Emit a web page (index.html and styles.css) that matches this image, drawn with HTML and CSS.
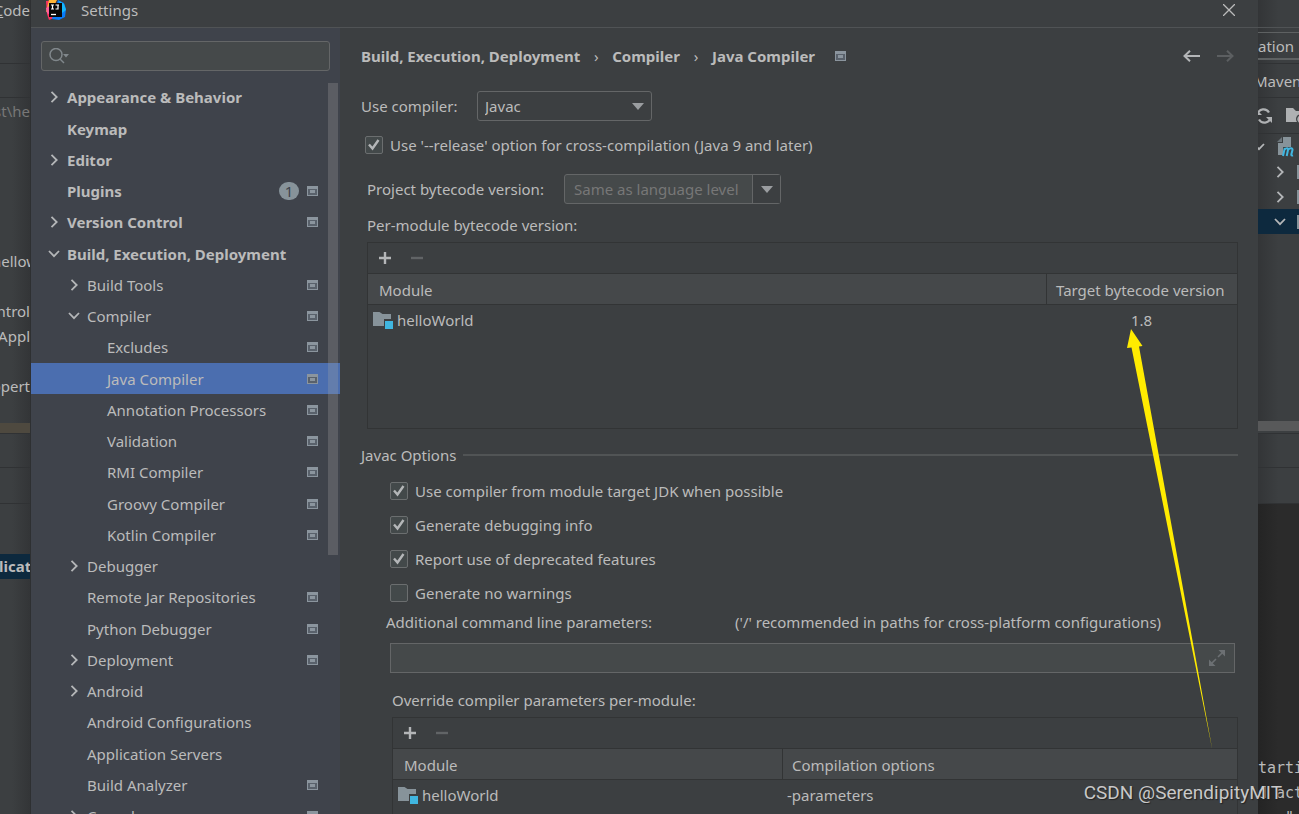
FILE: index.html
```html
<!DOCTYPE html>
<html lang="en">
<head>
<meta charset="utf-8">
<title>Settings</title>
<link rel="stylesheet" href="styles.css">
</head>
<body>
<svg class="defs" aria-hidden="true">
  <symbol id="right" viewBox="0 0 16 16"><path d="M5.5 2.8 10.7 8 5.5 13.2" fill="none" stroke="#b4b6b8" stroke-width="1.8"/></symbol>
  <symbol id="down" viewBox="0 0 16 16"><path d="M3 5 8 10.2 13 5" fill="none" stroke="#b4b6b8" stroke-width="1.8"/></symbol>
  <symbol id="proj" viewBox="0 0 11 10"><path fill="#8b959e" fill-rule="evenodd" d="M0 0h11v10H0zM1 3v6h9V3z"/><path fill="#59616b" d="M1 3h9v6H1z"/><path fill="#8b959e" d="M3 4h5v3H3z"/></symbol>
  <symbol id="plus" viewBox="0 0 14 14"><path d="M7 1v12M1 7h12" stroke="#b4b6b8" stroke-width="2.4"/></symbol>
  <symbol id="minus" viewBox="0 0 14 14"><path d="M1 7h12" stroke="#616466" stroke-width="2.4"/></symbol>
  <symbol id="folder" viewBox="0 0 20 18"><path d="M0 1h6.500l3 2H18v5h-7v7H0z" fill="#87939a"/><path d="M12 10h8v8h-8z" fill="#40b6e0"/></symbol>
  <symbol id="tri" viewBox="0 0 12 7"><path d="M0 0h12L6 7z" fill="#9a9da0"/></symbol>
</svg>
<div class="screen">
  <div class="ide ide-left">
    <div class="cell menu"><span><u>C</u>ode</span></div>
    <div class="cell nav"></div>
    <div class="files">
      <span class="path">st\he</span>
      <span class="far">hellow</span>
      <span class="mid">ntrol</span>
      <span>Appl</span>
      <span class="mid">opert</span>
    </div>
    <div class="band"></div>
    <div class="cell tab"></div>
    <div class="cell bar"></div>
    <div class="services"><b>licat</b></div>
  </div>

  <main class="dialog">
    <header class="titlebar">
      <svg class="logo" viewBox="0 0 20 20"><path d="M0 1 9 0 13 16 3 20 1 14z" fill="#fc315f"/><path d="M3 0h8L6 9 0 12z" fill="#ffb638"/><path d="M0 8 5 5 6 16 1 13z" fill="#ff5c9d"/><path d="M12 0 18 3 20 9 19 17 13 20 6 19z" fill="#087cfa"/><path d="M13 1 18 4 20 10 16 13z" fill="#14b8fa"/><path d="M3 3h13v14H3z" fill="#080808"/><path d="M5 5h3M6.500 5v4M5 9h3M9.500 5H13M12 5v4H9.500" fill="none" stroke="#fff" stroke-width="1.200"/><path d="M5 14.500h5" stroke="#fff" stroke-width="1.300"/></svg>
      <h1>Settings</h1>
      <button class="icon-btn close" aria-label="Close"><svg viewBox="0 0 12 12" width="12" height="12"><path d="M0 0 12 12M12 0 0 12" stroke="#bbb" stroke-width="1.300"/></svg></button>
    </header>
    <div class="body">
      <aside class="sidebar">
        <div class="search">
          <svg viewBox="0 0 21 16" width="21" height="16"><circle cx="7" cy="6.500" r="6" fill="none" stroke="#80878b" stroke-width="1.500"/><path d="m11 11 4 4" stroke="#80878b" stroke-width="1.500"/><path d="M14 6h6l-3 3.500z" fill="#80878b"/></svg>
          <input type="text" aria-label="Search settings">
        </div>
        <nav class="tree">
          <a href="#" class="l0"><svg><use href="#right"/></svg><span>Appearance &amp; Behavior</span></a>
          <a href="#" class="l0"><i></i><span>Keymap</span></a>
          <a href="#" class="l0"><svg><use href="#right"/></svg><span>Editor</span></a>
          <a href="#" class="l0"><i></i><span>Plugins</span><em>1</em><svg class="p"><use href="#proj"/></svg></a>
          <a href="#" class="l0"><svg><use href="#right"/></svg><span>Version Control</span><svg class="p"><use href="#proj"/></svg></a>
          <a href="#" class="l0"><svg><use href="#down"/></svg><span>Build, Execution, Deployment</span></a>
          <a href="#" class="l1"><svg><use href="#right"/></svg><span>Build Tools</span><svg class="p"><use href="#proj"/></svg></a>
          <a href="#" class="l1"><svg><use href="#down"/></svg><span>Compiler</span><svg class="p"><use href="#proj"/></svg></a>
          <a href="#" class="l2"><i></i><span>Excludes</span><svg class="p"><use href="#proj"/></svg></a>
          <a href="#" class="l2 selected"><i></i><span>Java Compiler</span><svg class="p"><use href="#proj"/></svg></a>
          <a href="#" class="l2"><i></i><span>Annotation Processors</span><svg class="p"><use href="#proj"/></svg></a>
          <a href="#" class="l2"><i></i><span>Validation</span><svg class="p"><use href="#proj"/></svg></a>
          <a href="#" class="l2"><i></i><span>RMI Compiler</span><svg class="p"><use href="#proj"/></svg></a>
          <a href="#" class="l2"><i></i><span>Groovy Compiler</span><svg class="p"><use href="#proj"/></svg></a>
          <a href="#" class="l2"><i></i><span>Kotlin Compiler</span><svg class="p"><use href="#proj"/></svg></a>
          <a href="#" class="l1"><svg><use href="#right"/></svg><span>Debugger</span></a>
          <a href="#" class="l1"><i></i><span>Remote Jar Repositories</span><svg class="p"><use href="#proj"/></svg></a>
          <a href="#" class="l1"><i></i><span>Python Debugger</span><svg class="p"><use href="#proj"/></svg></a>
          <a href="#" class="l1"><svg><use href="#right"/></svg><span>Deployment</span><svg class="p"><use href="#proj"/></svg></a>
          <a href="#" class="l1"><svg><use href="#right"/></svg><span>Android</span></a>
          <a href="#" class="l1"><i></i><span>Android Configurations</span></a>
          <a href="#" class="l1"><i></i><span>Application Servers</span></a>
          <a href="#" class="l1"><i></i><span>Build Analyzer</span><svg class="p"><use href="#proj"/></svg></a>
          <a href="#" class="l1"><svg><use href="#right"/></svg><span>Console</span><svg class="p"><use href="#proj"/></svg></a>
          <div class="thumb"></div>
        </nav>
      </aside>

      <section class="content">
        <div class="crumbs">
          <b>Build, Execution, Deployment</b><span>›</span><b>Compiler</b><span>›</span><b>Java Compiler</b>
          <svg class="p"><use href="#proj"/></svg>
          <div class="history">
            <button class="icon-btn" aria-label="Back"><svg viewBox="0 0 17 12" width="17" height="12"><path d="M17 6H1.500M7 .8 1.500 6 7 11.200" fill="none" stroke="#b4b6b8" stroke-width="2"/></svg></button>
            <button class="icon-btn" aria-label="Forward" disabled><svg viewBox="0 0 17 12" width="17" height="12"><path d="M0 6h15.500M10 .8 15.500 6 10 11.200" fill="none" stroke="#5c5f61" stroke-width="2"/></svg></button>
          </div>
        </div>

        <div class="field">
          <label for="compiler">Use compiler:</label>
          <div class="select"><select id="compiler"><option>Javac</option></select><svg><use href="#tri"/></svg></div>
        </div>
        <label class="check release"><input type="checkbox" checked>Use '--release' option for cross-compilation (Java 9 and later)</label>
        <div class="field indent">
          <label for="bytecode">Project bytecode version:</label>
          <div class="combo"><input id="bytecode" type="text" value="Same as language level" disabled><button aria-label="Show versions"><svg><use href="#tri"/></svg></button></div>
        </div>
        <p class="caption indent">Per-module bytecode version:</p>
        <div class="panel modules">
          <div class="toolbar"><button class="icon-btn" aria-label="Add"><svg><use href="#plus"/></svg></button><button class="icon-btn" aria-label="Remove" disabled><svg><use href="#minus"/></svg></button></div>
          <table>
            <colgroup><col><col class="target"></colgroup>
            <thead><tr><th>Module</th><th>Target bytecode version</th></tr></thead>
            <tbody><tr><td><div class="module"><svg><use href="#folder"/></svg>helloWorld</div></td><td class="center">1.8</td></tr></tbody>
          </table>
        </div>

        <h2>Javac Options</h2>
        <div class="checks">
          <label class="check"><input type="checkbox" checked>Use compiler from module target JDK when possible</label>
          <label class="check"><input type="checkbox" checked>Generate debugging info</label>
          <label class="check"><input type="checkbox" checked>Report use of deprecated features</label>
          <label class="check"><input type="checkbox">Generate no warnings</label>
        </div>
        <div class="params">
          <label for="params">Additional command line parameters:</label>
          <span>('/' recommended in paths for cross-platform configurations)</span>
        </div>
        <div class="expand">
          <input id="params" type="text">
          <button class="icon-btn" aria-label="Expand"><svg viewBox="0 0 16 16" width="16" height="16"><path d="M9.500 0H16v6.500zM0 9.500V16h6.500z" fill="#6c7073"/><path d="m14 2-5 5M2 14l5-5" stroke="#6c7073" stroke-width="1.600"/></svg></button>
        </div>
        <p class="caption override">Override compiler parameters per-module:</p>
        <div class="panel options">
          <div class="toolbar"><button class="icon-btn" aria-label="Add"><svg><use href="#plus"/></svg></button><button class="icon-btn" aria-label="Remove" disabled><svg><use href="#minus"/></svg></button></div>
          <table>
            <colgroup><col class="name"><col></colgroup>
            <thead><tr><th>Module</th><th>Compilation options</th></tr></thead>
            <tbody><tr><td><div class="module"><svg><use href="#folder"/></svg>helloWorld</div></td><td>-parameters</td></tr></tbody>
          </table>
        </div>
      </section>
    </div>
  </main>

  <div class="ide ide-right">
    <div class="head"></div>
    <div class="cell run"><span>ation</span></div>
    <div class="cell nav maven"><span>Maven</span></div>
    <div class="cell tools">
      <svg viewBox="0 0 16 16" width="16" height="16"><path d="M1.500 6A6.300 6.300 0 0 1 13 4.500M14.500 10A6.300 6.300 0 0 1 3 11.500" fill="none" stroke="#afb1b3" stroke-width="2.200"/><path d="M0 1v6h6zM16 15V9h-6z" fill="#afb1b3"/></svg>
      <svg viewBox="0 0 20 18" width="20" height="18"><path d="M0 1h7l3 3h10v11H0z" fill="#afb1b3"/><circle cx="15" cy="12" r="5" fill="#3c3f41"/><path d="M18 9.500A3.500 3.500 0 1 0 18 15" fill="none" stroke="#afb1b3" stroke-width="1.800"/></svg>
    </div>
    <div class="projects">
      <div class="root"><svg width="16" height="16"><use href="#down"/></svg><svg viewBox="0 0 18 20" width="18" height="20"><path d="M6 0h8v10H6v8H1V6h5z" fill="#87939a"/><path d="M5 0v5H0z" fill="#6c767c"/><path d="m6 19 1.800-8M7.500 12.500c2-2 4-1.500 3.500.5l-1.300 6M11 13c2-2.500 5-2 4.500 0l-1.200 4.500q0 1.500 1.700.8" fill="none" stroke="#40b6e0" stroke-width="2"/></svg></div>
      <div><svg width="16" height="16"><use href="#right"/></svg><i></i></div>
      <div><svg width="16" height="16"><use href="#right"/></svg><i></i></div>
      <div class="active"><svg width="16" height="16"><use href="#down"/></svg><i></i></div>
    </div>
    <div class="hscroll"></div>
    <div class="cell tab"></div>
    <div class="cell bar"></div>
    <pre class="console">tarti
d act
   "</pre>
  </div>

  <svg class="arrow" viewBox="0 0 86 422" width="86" height="422"><path d="M5 0 16.500 17 13 17.500 86.500 421.500 5.500 18.500 1 19z" fill="#ffeb00"/></svg>
  <div class="watermark">CSDN @SerendipityMIT</div>
</div>
</body>
</html>
```

FILE: styles.css
```css
* { box-sizing: border-box; }
body {
  margin: 0;
  background: #3c3f41;
  color: #bbbbbb;
  font: 15px/20px "Noto Sans", sans-serif;
}
button, input, select { font: inherit; color: inherit; }
h1, h2, p, pre { margin: 0; font-size: 15px; font-weight: 400; }
.defs { position: absolute; width: 0; height: 0; }
.screen { position: relative; display: flex; height: 100vh; overflow: hidden; }

/* Window behind the dialog */
.ide { display: flex; flex-direction: column; overflow: hidden; white-space: nowrap; }
.ide-left { flex: 0 0 31px; border-right: 1px solid #2e3032; background: linear-gradient(90deg, #3c3f41 40%, #333537); }
.ide-right { flex: 0 0 41px; background: linear-gradient(90deg, #333537, #3c3f41 50%); }
.cell { flex: none; border-bottom: 1px solid #303234; }
.ide-left > div { display: flex; justify-content: flex-end; }
.menu { height: 64px; }
.nav { height: 34px; }
.ide-left .files { flex: 0 0 325px; flex-direction: column; justify-content: flex-start; align-items: flex-end; padding-top: 1px; }
.files span { line-height: 25px; }
.files .path { color: #777; }
.files .far { margin: 125px -8px 0 0; }
.files .mid { margin-top: 25px; }
.band { flex: 0 0 10px; background: #4e493f; }
.tab { height: 35px; }
.band + .tab { border-top: 1px solid #303234; }
.bar { height: 36px; }
.services { flex: 1; align-items: flex-start; padding-top: 50px; }
.services b { width: 31px; background: #0d293e; line-height: 25px; text-align: right; }

.head { flex: 0 0 28px; border-bottom: 1px solid #505355; }
.run { height: 36px; padding: 4px 0 3px; }
.run span { display: block; height: 28px; border: solid #5e6162; border-width: 1px 0 2px; line-height: 26px; }
.maven { display: flex; align-items: center; }
.maven span { margin-left: -4px; }
.tools { height: 36px; display: flex; align-items: center; gap: 14px; }
.tools svg, .projects svg { flex: none; }
.tools svg:first-child { margin-left: -2px; }
.projects { flex: 0 0 287px; }
.projects div { height: 25px; display: flex; align-items: center; gap: 9px; padding-left: 14px; }
.projects .root { gap: 10px; margin-left: -21px; }
.projects i { width: 4px; height: 14px; background: #87939a; }
.projects .active { background: #0d293e; }
.hscroll { flex: 0 0 12px; background: #58595a; border-bottom: 2px solid #3c3f41; }
.hscroll + .tab { border-top: 1px solid #303234; }
.console { flex: 1; padding-top: 252px; background: linear-gradient(90deg, #242424, #2b2b2b 50%); font: 15px/25px "DejaVu Sans Mono", monospace; }

/* Dialog */
.dialog { flex: 1; min-width: 0; display: flex; flex-direction: column; background: #3c3f41; }
.titlebar { flex: none; display: flex; align-items: center; height: 28px; padding: 0 23px 7px 15px; border-bottom: 1px solid #505355; }
.logo { width: 20px; height: 20px; margin-right: 15px; }
.icon-btn { display: flex; padding: 0; border: 0; background: none; }
.close { margin-left: auto; }
.body { flex: 1; min-height: 0; display: flex; }

.sidebar { flex: 0 0 309px; background: #3f434b; overflow: hidden; }
.search { display: flex; align-items: center; height: 30px; margin: 13px 10px 10px; padding-left: 7px; border: 1px solid #646667; border-radius: 3px; background: #45494a; }
.search input { flex: 1; min-width: 0; border: 0; background: none; }
.tree { position: relative; }
.tree a { display: flex; align-items: center; gap: 5px; height: 31px; padding: 0 22px 0 15px; color: inherit; text-decoration: none; }
.tree a:nth-child(4n + 1) { height: 32px; }
.tree .l0 { font-weight: 700; }
.tree .l1 { padding-left: 35px; }
.tree .l2 { padding-left: 55px; }
.tree i, .tree svg { flex: none; width: 16px; height: 16px; }
.tree span { flex: 1; white-space: nowrap; }
.tree .p, .crumbs .p { flex: none; width: 11px; height: 10px; }
.tree em { width: 20px; height: 18px; margin-right: 3px; border-radius: 9px; background: #87939a; color: #3f434b; font-style: normal; font-weight: 400; line-height: 18px; text-align: center; }
.tree .selected { background: #4b6eaf; }
.thumb { position: absolute; top: 2px; right: 2px; width: 10px; height: 472px; background: rgba(166, 166, 166, .27); }

.content { flex: 1; min-width: 0; padding: 18px 20px 0 21px; white-space: nowrap; }
.crumbs { display: flex; align-items: center; height: 20px; margin-bottom: 25px; }
.crumbs span { width: 32px; text-align: center; }
.crumbs .p { margin-left: 20px; }
.history { display: flex; gap: 17px; margin-left: auto; padding-right: 4px; }

.field { display: flex; align-items: center; height: 30px; }
.indent { padding-left: 6px; }
.field > label { width: 116px; }
.field.indent > label { width: 197px; }
.select { position: relative; width: 175px; height: 30px; }
.select select { width: 100%; height: 100%; padding: 0 7px; border: 1px solid #646667; border-radius: 3px; background: #3c3f41; appearance: none; }
.select svg { position: absolute; top: 12px; right: 8px; width: 12px; height: 7px; pointer-events: none; }
.combo { display: flex; width: 217px; height: 30px; border: 1px solid #646667; border-radius: 3px; background: #45494a; }
.combo input { flex: 1; min-width: 0; padding: 0 9px; border: 0; background: none; color: #777; }
.combo button { width: 28px; padding: 0; border: 0; border-left: 1px solid #646667; background: #3c3f41; }
.combo svg { display: block; width: 12px; height: 7px; margin: auto; }

.check { display: flex; align-items: center; gap: 7px; height: 20px; }
.check input { width: 18px; height: 18px; margin: 0; appearance: none; border: 1px solid #6b6e6f; border-radius: 2px; background: #43494a; }
.check input:checked { background-image: url("data:image/svg+xml,%3Csvg xmlns='http://www.w3.org/2000/svg' viewBox='0 0 16 16'%3E%3Cpath d='M3 7.500 6.500 11.500 12.500 3' fill='none' stroke='%23b4b6b8' stroke-width='2.400'/%3E%3C/svg%3E"); }
.release { margin: 14px 0 19px 4px; }
.caption { margin: 11px 0 7px; }

.panel { border: 1px solid #323435; }
.modules { height: 187px; margin-left: 6px; }
.toolbar { display: flex; align-items: center; gap: 18px; height: 31px; padding-left: 10px; border-bottom: 1px solid #323435; }
.toolbar svg { width: 14px; height: 14px; }
table { width: 100%; border-collapse: separate; border-spacing: 0; table-layout: fixed; }
.target { width: 191px; }
.name { width: 389px; }
th { height: 31px; padding: 2px 0 0 11px; background: #45484a; border-bottom: 1px solid #323435; font-weight: 400; text-align: left; }
th + th { padding-left: 9px; border-left: 1px solid #323435; }
td { height: 30px; padding: 0 0 0 5px; }
td.center { padding: 0; text-align: center; }
.module { display: flex; align-items: center; gap: 4px; }
.module svg { width: 20px; height: 18px; }

h2 { display: flex; align-items: center; gap: 7px; height: 20px; margin: 16px 0; }
h2::after { content: ""; flex: 1; height: 2px; background: #515455; }
.checks { display: grid; gap: 14px; padding-left: 29px; }
.params { display: flex; margin: 9px 0 11px; padding-left: 25px; }
.params label { width: 349px; }
.expand { position: relative; height: 30px; margin: 0 3px 0 29px; }
.expand input { width: 100%; height: 100%; border: 1px solid #646667; background: #45494a; }
.expand .icon-btn { position: absolute; top: 7px; right: 10px; }
.override { margin: 17px 0 7px; padding-left: 31px; }
.options { height: 187px; margin-left: 31px; }

/* Annotations over the window */
.arrow { position: absolute; top: 329px; left: 1126px; pointer-events: none; }
.watermark { position: absolute; right: 17px; bottom: 9px; color: #c8c8c8; font: 19px/24px Roboto, sans-serif; text-shadow: 1px 1px 1px #222; }
```
